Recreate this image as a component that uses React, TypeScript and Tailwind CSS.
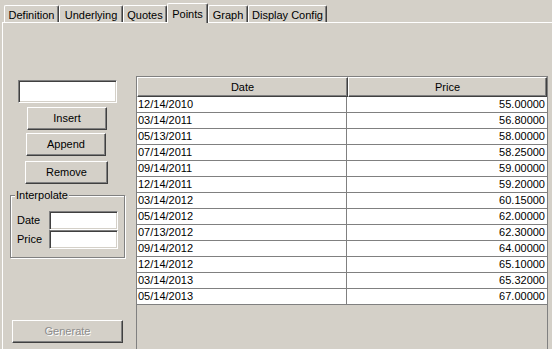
import React from 'react';

interface Point {
  date: string;
  price: string;
}

const points: Point[] = [
  { date: '12/14/2010', price: '55.00000' },
  { date: '03/14/2011', price: '56.80000' },
  { date: '05/13/2011', price: '58.00000' },
  { date: '07/14/2011', price: '58.25000' },
  { date: '09/14/2011', price: '59.00000' },
  { date: '12/14/2011', price: '59.20000' },
  { date: '03/14/2012', price: '60.15000' },
  { date: '05/14/2012', price: '62.00000' },
  { date: '07/13/2012', price: '62.30000' },
  { date: '09/14/2012', price: '64.00000' },
  { date: '12/14/2012', price: '65.10000' },
  { date: '03/14/2013', price: '65.32000' },
  { date: '05/14/2013', price: '67.00000' },
];

const tabs = [
  { label: 'Definition', w: 'w-[55px]' },
  { label: 'Underlying', w: 'w-[64px]' },
  { label: 'Quotes', w: 'w-[44px]' },
  { label: 'Points', w: 'w-[41px]', active: true },
  { label: 'Graph', w: 'w-[40px]' },
  { label: 'Display Config', w: 'w-[79px]' },
];

const raised =
  'border border-t-white border-l-white border-b-[#404040] border-r-[#404040] shadow-[inset_-1px_-1px_0_#808080]';
const sunken =
  'border border-t-[#808080] border-l-[#808080] border-b-white border-r-white shadow-[inset_1px_1px_0_#404040,inset_-1px_-1px_0_#d4d0c8] bg-white';

const Btn: React.FC<{ label: string; className: string; disabled?: boolean }> = ({ label, className, disabled }) => (
  <div
    className={`${raised} ${className} h-[23px] flex items-center justify-center ${
      disabled ? 'text-[#8c8c8c] [text-shadow:1px_1px_0_#ffffff]' : 'text-black'
    }`}
  >
    {label}
  </div>
);

const App: React.FC = () => {
  return (
    <div
      className="w-[552px] h-[349px] overflow-hidden bg-[#d4d0c8] text-[11px] text-black select-none"
      style={{ fontFamily: '"Liberation Sans", Arial, sans-serif' }}
    >
      {/* tab strip */}
      <div className="h-[22px] flex items-end pl-[4px]">
        {tabs.map(t =>
          t.active ? (
            <div
              key={t.label}
              className={`${t.w} h-[20px] -mb-px relative z-10 bg-[#d4d0c8] border-l border-t border-l-white border-t-white border-r border-r-[#404040] rounded-t-[2px] shadow-[inset_-1px_0_0_#808080] flex justify-center pt-[2px]`}
            >
              {t.label}
            </div>
          ) : (
            <div
              key={t.label}
              className={`${t.w} h-[17px] border-l border-t border-l-white border-t-white border-r border-r-[#404040] rounded-t-[2px] shadow-[inset_-1px_0_0_#808080] flex justify-center pt-[1px]`}
            >
              {t.label}
            </div>
          )
        )}
      </div>

      {/* tab panel */}
      <div className="ml-[2px] h-[327px] border-l border-t border-white flex">
        <div className="w-[133px] flex flex-col">
          <div className={`${sunken} ml-[15px] mt-[57px] w-[99px] h-[23px]`} />
          <Btn label="Insert" className="ml-[24px] mt-[4px] w-[80px]" />
          <Btn label="Append" className="ml-[23px] mt-[3px] w-[80px]" />
          <Btn label="Remove" className="ml-[22px] mt-[5px] w-[83px]" />

          <div className="relative ml-[7px] mt-[11px] w-[115px] h-[63px] border border-[#808080] shadow-[inset_1px_1px_0_#ffffff,1px_1px_0_#ffffff]">
            <span className="absolute left-[4px] -top-[8px] bg-[#d4d0c8] px-[1px] leading-[14px]">Interpolate</span>
            <div className="flex items-center mt-[15px]">
              <span className="w-[38px] pl-[6px]">Date</span>
              <div className={`${sunken} w-[69px] h-[19px]`} />
            </div>
            <div className="flex items-center">
              <span className="w-[38px] pl-[6px]">Price</span>
              <div className={`${sunken} w-[69px] h-[19px]`} />
            </div>
          </div>

          <Btn label="Generate" disabled className="ml-[9px] mt-[62px] w-[111px]" />
        </div>

        {/* grid */}
        <div className="mt-[53px] w-[412px] h-[280px] border-l border-t border-r border-[#808080] flex flex-col">
          <div className="flex h-[20px] bg-[#d4d0c8]">
            <div className={`${raised} w-[211px] flex items-center justify-center`}>Date</div>
            <div className={`${raised} w-[199px] flex items-center justify-center`}>Price</div>
          </div>
          {points.map(p => (
            <div key={p.date} className="flex h-[16px] bg-white border-b border-[#808080] w-[410px] leading-[15px]">
              <div className="w-[210px] border-r border-[#808080] pl-[1px]">{p.date}</div>
              <div className="flex-1 text-right pr-[2px]">{p.price}</div>
            </div>
          ))}
        </div>
      </div>
    </div>
  );
};

export default App;
